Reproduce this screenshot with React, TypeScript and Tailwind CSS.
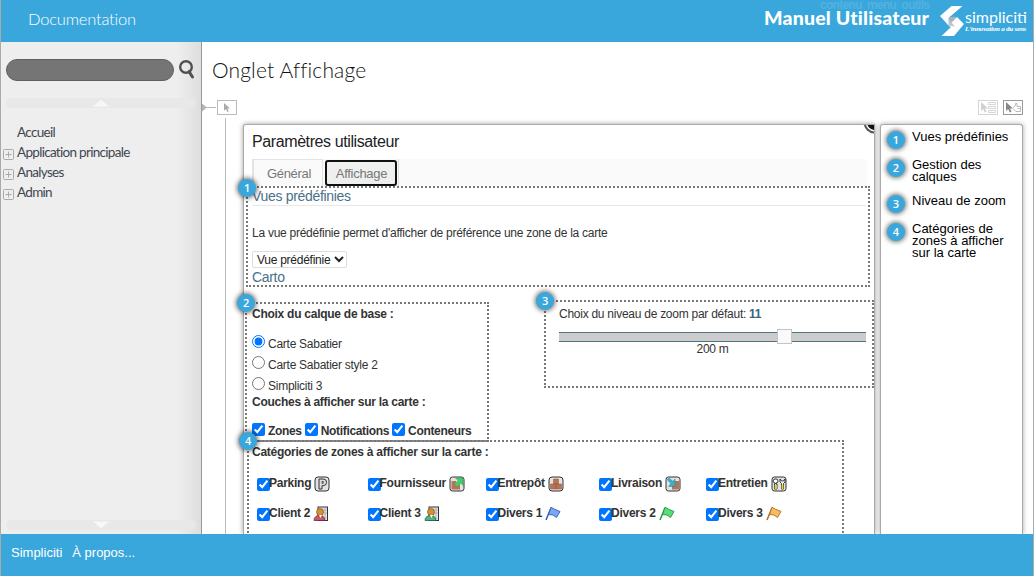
import React from "react";

function Badge({ n, className = "" }: { n: number; className?: string }) {
  return (
    <span
      className={`flex h-[18px] w-[18px] shrink-0 items-center justify-center rounded-full bg-[#3aa7dc] pb-px font-['Open_Sans',sans-serif] text-[11px] leading-none font-semibold text-white shadow-[0_0_5px_1px_rgba(0,0,0,0.6)] ${className}`}
    >
      {n}
    </span>
  );
}

function Logo() {
  return (
    <svg width="24" height="32" viewBox="0 0 24 32">
      <path d="M7.500 12.500V20L17 22L22 18.500L15 11.500Z" fill="#a3b3c0" />
      <path d="M8.500 21L17 12L24 19L14 31H1.500L11 22Z" fill="#fff" />
      <path d="M8.500 14L15 21.500L8.500 20.500Z" fill="#b9c6d0" />
      <path d="M11.500 1H22.500L8.500 13V20.500L0 11Z" fill="#fff" />
    </svg>
  );
}

function PCursor({ color }: { color: string }) {
  return <path d="M0 0V9L2.200 7L3.800 10.500L5.500 9.700L4 6.500H7Z" fill={color} />;
}

const frame = { fill: "#e3e3e3", stroke: "#333", strokeWidth: 1 };

function CategoryIcon({ kind }: { kind: string }) {
  const flag = (a: string, b: string) => (
    <>
      <path d="M6 2L1 14" stroke={b} strokeWidth="1.5" />
      <path d="M6 1.200L9.500 3.200L15 5.500L11.500 11.500L8 9L3.500 8.500Z" fill={a} stroke={b} strokeWidth="0.9" />
    </>
  );
  const client = (c: string, d: string) => (
    <>
      <rect x="5" y="1" width="9.500" height="13.500" fill="#e6e6e6" stroke="#333" />
      <path d="M7 4H14M7 7H14M9 1V13M12 1V13" stroke="#999" strokeWidth="0.6" />
      <path d="M1 14.500C1 11 3.500 9.500 6.500 9.500S12 11 12 14.500Z" fill={c} stroke={d} strokeWidth="0.8" />
      <circle cx="7" cy="6" r="3.500" fill="#d9902f" stroke="#7b4a13" strokeWidth="0.6" />
      <path d="M6 9L7.500 12L9 9Z" fill="#fff" />
    </>
  );
  return (
    <svg width="16" height="16" viewBox="0 0 16 16" className="shrink-0">
      {kind === "parking" && (
        <>
          <rect x="1" y="1" width="14" height="14" rx="3" {...frame} />
          <path d="M5 13V3H9.200A3.200 3.200 0 0 1 9.200 9.700H8V13Z" fill="#ddd" stroke="#333" />
          <path d="M8 5.500H9.200V7.300H8Z" fill="#ddd" stroke="#333" strokeWidth="0.8" />
        </>
      )}
      {kind === "supplier" && (
        <>
          <rect x="1" y="1" width="14" height="14" rx="2.500" {...frame} />
          <path d="M2.500 5H7V8.500H11V13.500H2.500Z" fill="#b87356" />
          <path d="M6.500 2H14V9.500L11.800 7.300L8 11L5.300 8.300L9 4.500Z" fill="#3fd06c" stroke="#2a9a4c" strokeWidth="0.4" />
        </>
      )}
      {kind === "warehouse" && (
        <>
          <rect x="1" y="1" width="14" height="14" rx="3" {...frame} />
          <path d="M5.500 3H10.500V8H13.500V13H2.500V8H5.500Z" fill="#b87356" stroke="#9c6047" strokeWidth="0.6" />
          <path d="M8 8V13M5.500 8H10.500" stroke="#8a4e36" strokeWidth="0.6" />
        </>
      )}
      {kind === "delivery" && (
        <>
          <rect x="1" y="1" width="14" height="14" rx="2.500" {...frame} />
          <path d="M7 13.500V8.500H9.500V5H14V13.500Z" fill="#b87356" />
          <path d="M2 3.500L4 2L7.800 5.300L10 3V10.500H3.500L5.800 7.500Z" fill="#35b2c8" stroke="#167387" strokeWidth="0.4" />
        </>
      )}
      {kind === "service" && (
        <>
          <rect x="1" y="1" width="14" height="14" rx="2.500" {...frame} />
          <path d="M5 3A2 2 0 0 1 5 7V8H6V13H3.500V8H4.300V7A2 2 0 0 1 4 3Z" fill="#fff" stroke="#222" strokeWidth="0.9" />
          <path d="M9 3V6L10.500 7.500V13H12.500V7.500L14 6V3L12.500 5H10.500Z" fill="#fff" stroke="#222" strokeWidth="0.9" />
          <path d="M3.700 9H5.800V13H3.700ZM10.600 8.500H12.400V13H10.600Z" fill="#e3d62c" />
        </>
      )}
      {kind === "client2" && client("#c45a6c", "#7d2435")}
      {kind === "client3" && client("#4fb283", "#1c6a45")}
      {kind === "flag1" && flag("#7ba6f5", "#2f5fb8")}
      {kind === "flag2" && flag("#59dd76", "#24943f")}
      {kind === "flag3" && flag("#f5bd62", "#b56a20")}
    </svg>
  );
}

function Category({ label, kind, width }: { label: string; kind: string; width: string }) {
  return (
    <div className={`flex h-[30px] shrink-0 items-start ${width}`}>
      <input type="checkbox" defaultChecked className="mt-[8px] h-[13px] w-[13px] shrink-0" />
      <span className="mt-[6px] -ml-px mr-[3px] text-[12px] leading-[15px] font-bold whitespace-nowrap">{label}</span>
      <span className="mt-[6px]">
        <CategoryIcon kind={kind} />
      </span>
    </div>
  );
}

function Sidebar() {
  const items = ["Accueil", "Application principale", "Analyses", "Admin"];
  return (
    <aside className="flex w-[201px] shrink-0 flex-col border-r border-[#999] bg-[linear-gradient(to_right,#eee_88%,#dedede)]">
      <div className="mt-[17px] ml-[5px] flex items-start">
        <div className="h-[22px] w-[168px] rounded-[11px] border border-[#606060] bg-[#757575]" />
        <svg width="18" height="22" viewBox="0 0 18 22" className="ml-[4px]">
          <circle cx="8" cy="8" r="5.800" fill="none" stroke="#505050" strokeWidth="2.400" />
          <path d="M11 12.500L14.500 18" stroke="#505050" strokeWidth="3" strokeLinecap="round" />
        </svg>
      </div>
      <div className="mt-[17px] ml-[5px] flex h-[10px] w-[190px] justify-center rounded-full bg-[#e8e8e8]">
        <svg width="16" height="10">
          <path d="M0 8.500L8 1.500L16 8.500Z" fill="#f7f7f7" />
        </svg>
      </div>
      <nav className="mt-[14px] flex flex-col font-['Lato',sans-serif] text-[13.5px] tracking-[-0.7px] text-[#3f4650]">
        {items.map((item, i) => (
          <div key={item} className="flex h-[20px] items-center">
            <span className="flex w-[16px] pt-[4px] pl-[2px]">
              {i > 0 && (
                <svg width="11" height="11" fill="none" stroke="#aaa">
                  <rect x="0.5" y="0.5" width="10" height="10" rx="1" />
                  <path d="M2.500 5.500H8.500M5.500 2.500V8.500" />
                </svg>
              )}
            </span>
            <span className="whitespace-nowrap">{item}</span>
          </div>
        ))}
      </nav>
      <div className="mt-auto mb-[4px] ml-[5px] flex h-[10px] w-[190px] justify-center rounded-full bg-[#e8e8e8]">
        <svg width="16" height="10">
          <path d="M0 1.500L8 8.500L16 1.500Z" fill="#f7f7f7" />
        </svg>
      </div>
    </aside>
  );
}

function SettingsPanel() {
  return (
    <section className="flex w-[632px] shrink-0 flex-col rounded-tl-[3px] border-t border-r border-l border-[#aaa] bg-white text-[12px] tracking-[-0.26px] text-[#333] shadow-[0_0_5px_rgba(0,0,0,0.4)]">
      <div className="flex h-[34px] shrink-0 justify-between pl-[8px]">
        <h2 className="pt-[7px] text-[16px] leading-[20px] tracking-[-0.4px] whitespace-nowrap text-[#222]">Paramètres utilisateur</h2>
        <svg width="11" height="10" viewBox="0 0 11 10">
          <circle cx="12" cy="-3" r="11.500" fill="#555" />
          <circle cx="12" cy="-3" r="9.500" fill="#fff" />
          <circle cx="12" cy="-3" r="8" fill="#111" />
        </svg>
      </div>
      <div className="mr-[7px] ml-[8px] flex h-[27px] shrink-0 bg-[#fafafa] text-[13px] tracking-[-0.3px] text-[#777]">
        <div className="flex w-[71px] items-center justify-center border-t border-r border-l-2 border-[#e3e3e3] pt-px pl-[2px]">Général</div>
        <div className="mt-[1px] ml-[2px] flex h-[26px] w-[72px] items-center justify-center rounded-[3px] border-2 border-[#111] bg-[#eef0f0] pt-px pl-px">
          Affichage
        </div>
        <div className="ml-[1px] w-px bg-[#ddd]" />
      </div>
      <div className="relative ml-[2px] h-[101px] w-[624px] shrink-0 border-2 border-dotted border-[#777] pl-[4px]">
        <Badge n={1} className="absolute -top-[9px] -left-[10px]" />
        <div className="mr-[2px] h-[18px] border-b border-[#e8e8e8] text-[14px] leading-[17px] tracking-[-0.32px] text-[#4a7189]">Vues prédéfinies</div>
        <div className="mt-[19px] h-[16px] leading-[16px] whitespace-nowrap">
          La vue prédéfinie permet d'afficher de préférence une zone de la carte
        </div>
        <div className="mt-[10px] flex h-[17px] w-[95px] items-center rounded-[2px] border border-[#ddd] pl-[4px] text-[#222]">
          <span className="whitespace-nowrap">Vue prédéfinie</span>
          <svg width="10" height="7" className="ml-[4px]">
            <path d="M1 1L5 5L9 1" fill="none" stroke="#222" strokeWidth="2" />
          </svg>
        </div>
        <div className="text-[14px] leading-[18px] tracking-[-0.32px] text-[#4a7189]">Carto</div>
      </div>
      <div className="flex h-[153px] shrink-0 items-start">
        <div className="relative mt-[15px] ml-[1px] h-[140px] w-[244px] shrink-0 border-2 border-dotted border-[#777] border-b-[#888] [border-bottom-style:solid] pl-[5px]">
          <Badge n={2} className="absolute -top-[10px] -left-[10px]" />
          <div className="pt-[2px] leading-[16px] font-bold">Choix du calque de base :</div>
          <div className="mt-[11px] flex flex-col">
            {["Carte Sabatier", "Carte Sabatier style 2", "Simpliciti 3"].map((label, i) => (
              <label key={label} className="flex h-[21px] items-start">
                <input type="radio" name="layer" defaultChecked={i === 0} className="mt-[2px] h-[13px] w-[13px]" />
                <span className="ml-[3px] pt-[3px] leading-[16px]">{label}</span>
              </label>
            ))}
          </div>
          <div className="-mt-[2px] leading-[16px] font-bold">Couches à afficher sur la carte :</div>
          <div className="mt-[13px] flex text-[12px] font-bold tracking-[-0.33px]">
            {["Zones", "Notifications", "Conteneurs"].map((label) => (
              <label key={label} className="mr-[3px] flex items-start">
                <input type="checkbox" defaultChecked className="h-[13px] w-[13px]" />
                <span className="ml-[3px] leading-[16px]">{label}</span>
              </label>
            ))}
          </div>
        </div>
        <div className="relative mt-[13px] ml-[55px] h-[88px] w-[330px] shrink-0 border-2 border-dotted border-[#777] pl-[13px]">
          <Badge n={3} className="absolute -top-[10px] -left-[10px]" />
          <div className="pt-[4px] leading-[16px]">
            Choix du niveau de zoom par défaut: <b className="text-[#39647c]">11</b>
          </div>
          <div className="mt-[7px] flex h-[15px] w-[307px] items-center">
            <div className="h-[10px] w-[218px] border-y border-[#4d7385] bg-[#ccc]" />
            <div className="h-[15px] w-[15px] border border-[#c4c4c4] bg-[#fafafa]" />
            <div className="h-[10px] flex-1 border-y border-[#4d7385] bg-[#ccc]" />
          </div>
          <div className="w-[307px] text-center leading-[10px]">200 m</div>
        </div>
      </div>
      <div className="relative ml-[3px] h-[200px] w-[597px] shrink-0 border-2 border-dotted border-[#777] pl-[3px]">
        <Badge n={4} className="absolute -top-[10px] -left-[10px]" />
        <div className="pt-[2px] leading-[16px] font-bold">Catégories de zones à afficher sur la carte :</div>
        <div className="mt-[10px] ml-[5px] flex">
          <Category label="Parking" kind="parking" width="w-[110.5px]" />
          <Category label="Fournisseur" kind="supplier" width="w-[118px]" />
          <Category label="Entrepôt" kind="warehouse" width="w-[113.5px]" />
          <Category label="Livraison" kind="delivery" width="w-[107px]" />
          <Category label="Entretien" kind="service" width="w-[100px]" />
        </div>
        <div className="ml-[5px] flex">
          <Category label="Client 2" kind="client2" width="w-[110.5px]" />
          <Category label="Client 3" kind="client3" width="w-[118px]" />
          <Category label="Divers 1" kind="flag1" width="w-[113.5px]" />
          <Category label="Divers 2" kind="flag2" width="w-[107px]" />
          <Category label="Divers 3" kind="flag3" width="w-[100px]" />
        </div>
      </div>
    </section>
  );
}

function Legend() {
  const items = [
    ["Vues prédéfinies"],
    ["Gestion des", "calques"],
    ["Niveau de zoom"],
    ["Catégories de", "zones à afficher", "sur la carte"],
  ];
  return (
    <section className="ml-[5px] flex w-[143px] shrink-0 flex-col gap-[12px] rounded-t-[3px] border border-b-0 border-[#aaa] bg-white pt-[6px] pl-[6px] text-[13px] leading-[12px] text-black shadow-[0_0_5px_rgba(0,0,0,0.35)]">
      {items.map((lines, i) => (
        <div key={lines[0]} className="flex min-h-[16px] items-start">
          <Badge n={i + 1} className="-mb-[4px]" />
          <div className="ml-[7px] whitespace-nowrap">
            {lines.map((line) => (
              <div key={line}>{line}</div>
            ))}
          </div>
        </div>
      ))}
    </section>
  );
}

export default function App() {
  return (
    <div className="flex h-[576px] w-[1034px] flex-col overflow-hidden border-x border-[#aaa] bg-white font-['Liberation_Sans',sans-serif]">
      <header className="relative flex h-[42px] shrink-0 items-start bg-[#3aa7dc] text-white">
        <span className="absolute -top-[2px] left-[819px] text-[12px] leading-[14px] font-bold tracking-[-0.7px] whitespace-pre text-[#52b1e0]">
          contenu  menu  outils
        </span>
        <span className="mt-[8px] ml-[27px] font-['Lato',sans-serif] text-[16.5px] leading-[22px] font-light tracking-[-0.2px]">Documentation</span>
        <span className="relative mt-[6px] mr-[11px] ml-auto font-['Lato',sans-serif] text-[19.5px] leading-[24px] font-black tracking-[0.17px] whitespace-nowrap">
          Manuel Utilisateur
        </span>
        <div className="mt-[5px] mr-[6px] flex">
          <Logo />
          <div className="ml-[1px] flex w-[62px] flex-col">
            <span className="pt-[3px] font-['Lato',sans-serif] text-[16px] leading-[18px]">simpliciti</span>
            <span className="font-['Liberation_Serif',serif] text-[7px] leading-[6px] font-bold tracking-[-0.22px] whitespace-nowrap italic">L'innovation a du sens</span>
          </div>
        </div>
      </header>
      <div className="flex min-h-0 flex-1">
        <Sidebar />
        <main className="flex min-w-0 flex-1 flex-col overflow-hidden">
          <h1 className="mt-[14px] ml-[10px] font-['Lato',sans-serif] text-[21px] leading-[28px] font-light tracking-[0.15px] text-[#111]">Onglet Affichage</h1>
          <div className="mt-[16px] flex h-[15px] shrink-0 items-start">
            <svg width="35" height="15">
              <path d="M0 3.500L5 7.500L0 11.500Z" fill="#b5b5b5" />
              <path d="M4 7.500H14" stroke="#bbb" />
              <rect x="15.500" y="0.500" width="19" height="14" fill="none" stroke="#bbb" />
              <g transform="translate(22 3) scale(.85)">
                <PCursor color="#aaa" />
              </g>
            </svg>
            <svg width="20" height="15" className="ml-auto">
              <rect x="0.500" y="0.500" width="19" height="14" fill="none" stroke="#d5d5d5" />
              <g transform="translate(3 2)">
                <PCursor color="#d0d0d0" />
              </g>
              <path d="M10.500 2.500H17.500V4.500H10.500ZM10.500 6.500H17.500V8.500H10.500ZM10.500 10.500H17.500V12.500H10.500Z" fill="none" stroke="#d5d5d5" />
            </svg>
            <svg width="20" height="15" className="mr-[10px] ml-[5px]">
              <rect x="0.500" y="0.500" width="19" height="14" fill="none" stroke="#999" />
              <g transform="translate(3 2)">
                <PCursor color="#888" />
              </g>
              <path d="M10 7.500L12.500 5.500V3.500H14V6.500H17.500V11.500H13L10 8.500M14.500 8.500H17" fill="none" stroke="#bbb" />
            </svg>
          </div>
          <div className="mt-[3px] flex min-h-0 flex-1">
            <div className="ml-[23px] w-px shrink-0 bg-[#bbb]" />
            <div className="ml-[17px] flex pt-[6px]">
              <SettingsPanel />
              <Legend />
            </div>
          </div>
        </main>
      </div>
      <footer className="flex h-[42px] shrink-0 gap-[10px] bg-[#3aa7dc] pt-[11px] pl-[10px] text-[13px] leading-[16px] text-white">
        <span>Simpliciti</span>
        <span>À propos...</span>
      </footer>
    </div>
  );
}
